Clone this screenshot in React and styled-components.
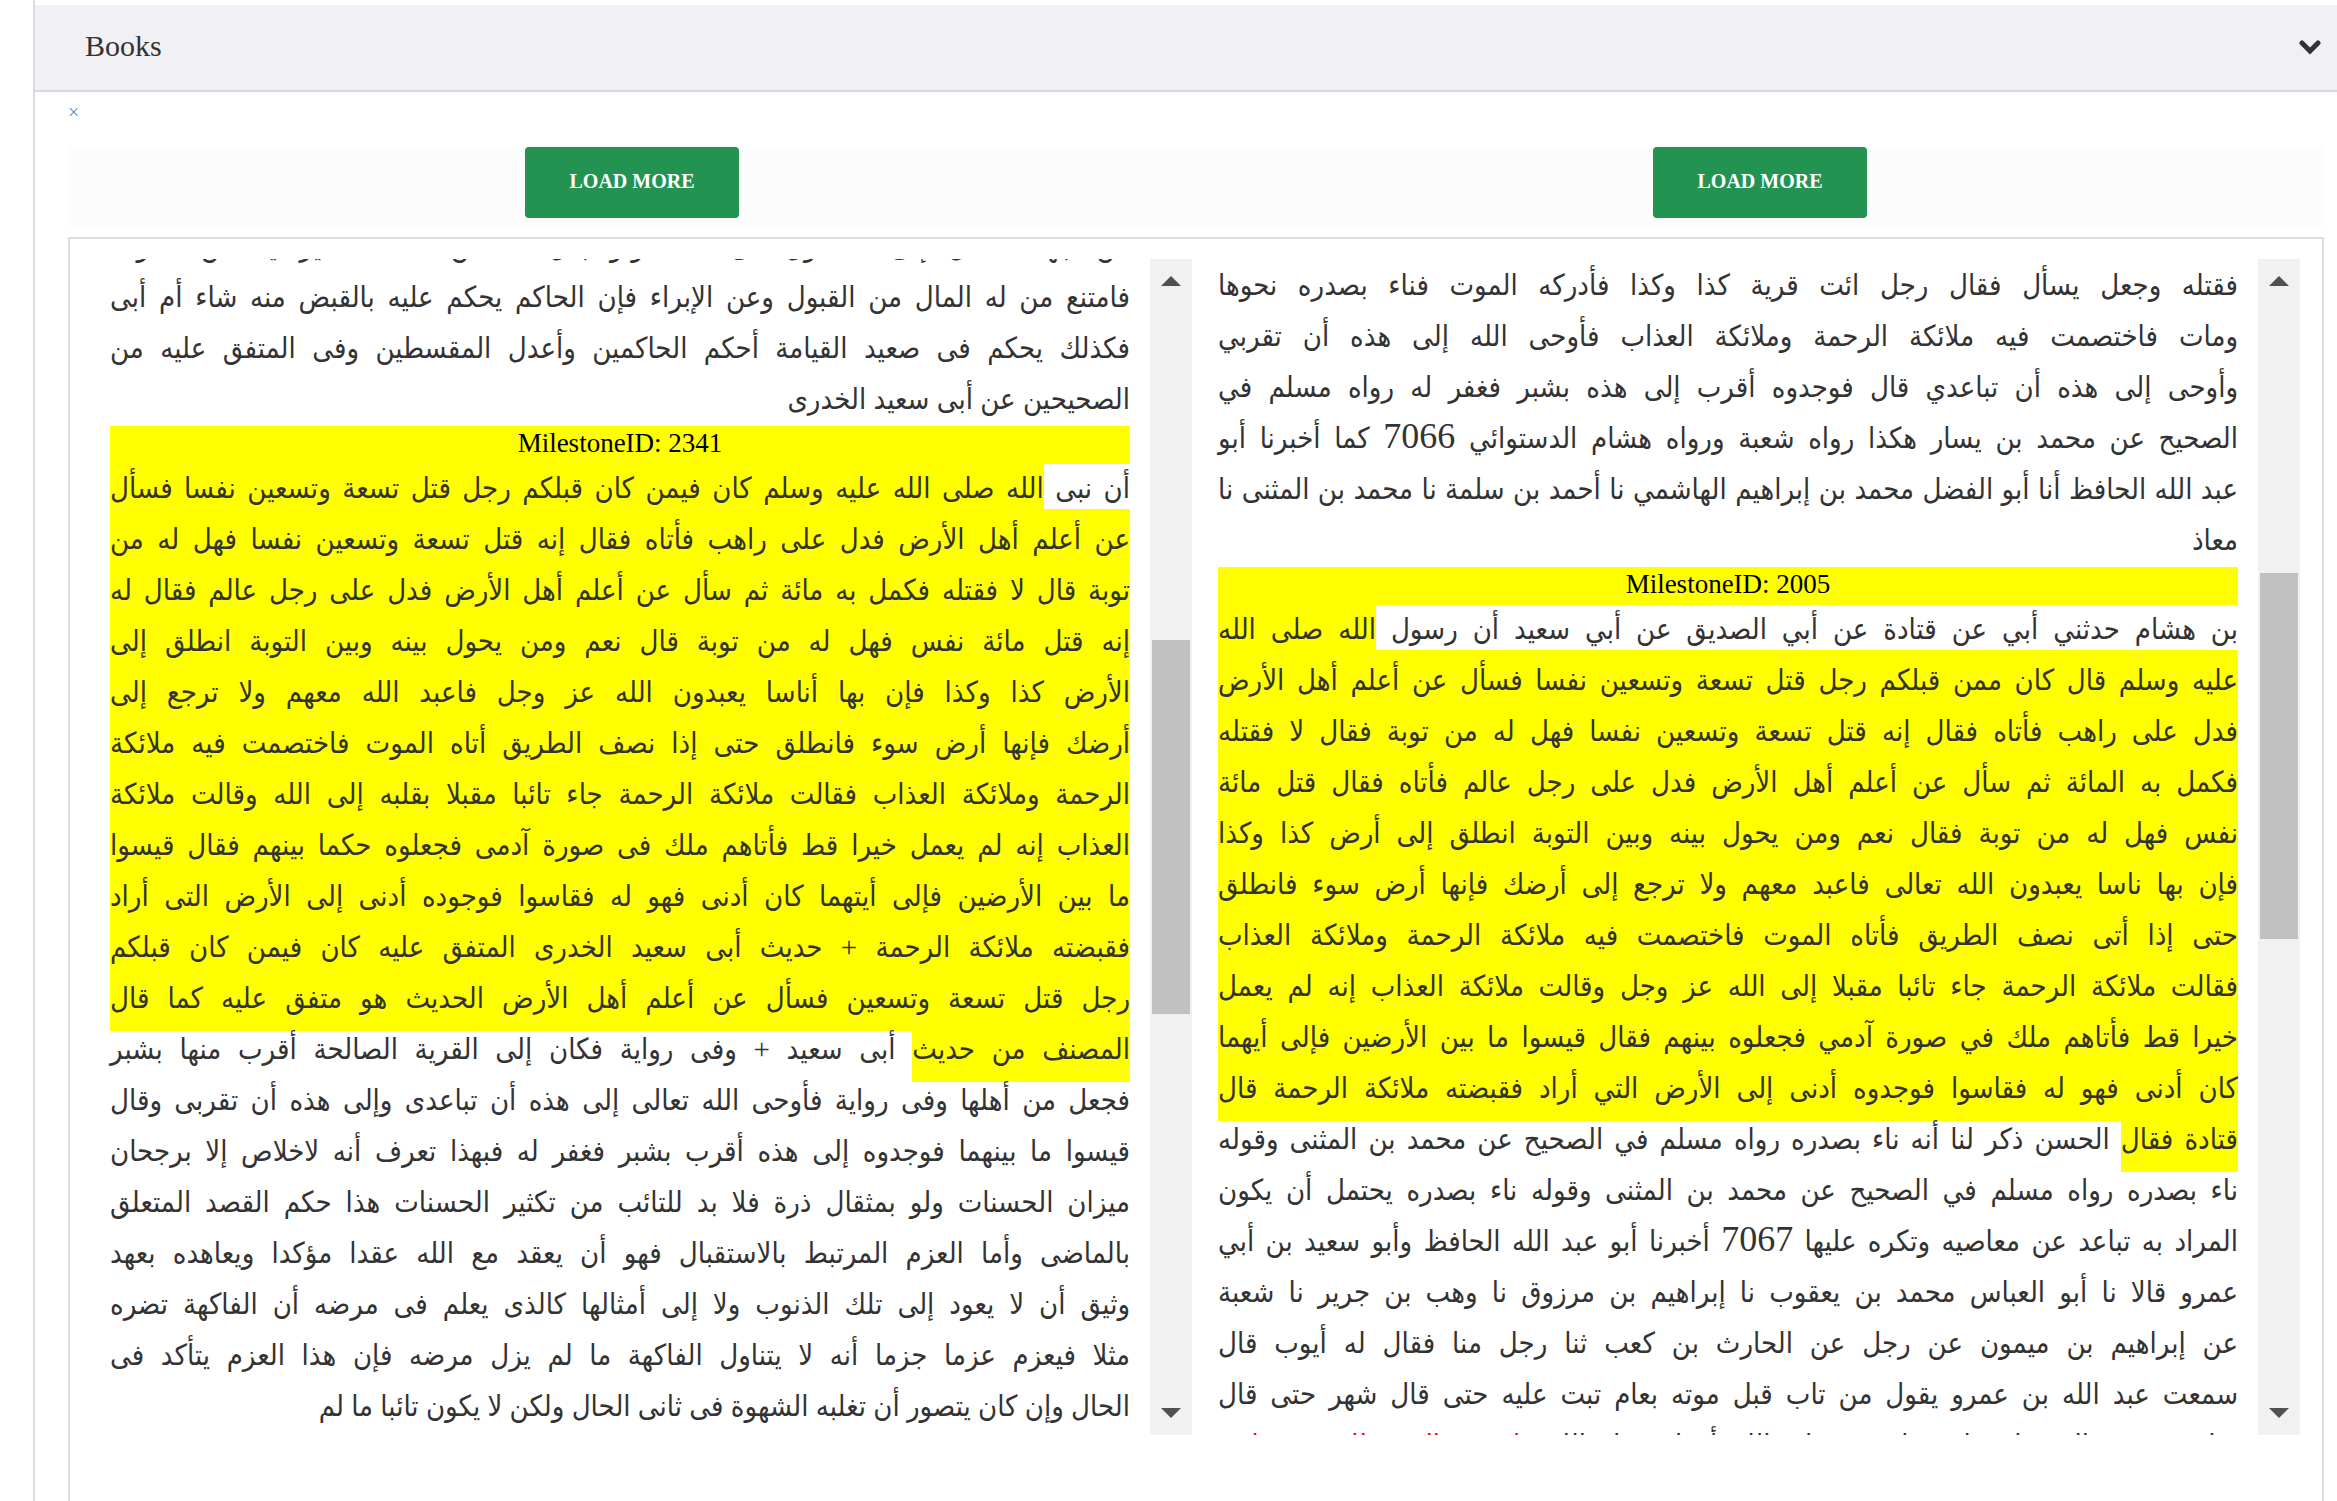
import React from "react";
import styled, { createGlobalStyle } from "styled-components";

const GlobalStyle = createGlobalStyle`
  * { box-sizing: border-box; }
  body { margin: 0; background: #fff; }
  button { font-family: inherit; border: 0; padding: 0; cursor: pointer; }
`;

const Page = styled.div`
  display: flex;
  height: 100vh;
  padding: 0 0 0 33px;
  overflow: hidden;
  color: #333;
  font-family: "Liberation Serif", "DejaVu Sans Condensed", "DejaVu Sans", serif;
`;

const Accordion = styled.section`
  display: flex;
  flex: 1;
  flex-direction: column;
  min-width: 0;
  padding-top: 5px;
  border-left: 2px solid #dcdcdc;
`;

const AccordionHeader = styled.button`
  display: flex;
  align-items: center;
  justify-content: space-between;
  flex: none;
  height: 87px;
  padding: 0 16px 4px 50px;
  border-bottom: 2px solid #d9d9dc;
  background: #f0f0f5;
  color: #333;
  font-size: 30px;
  line-height: 40px;
`;

const Body = styled.div`
  display: flex;
  flex: 1;
  flex-direction: column;
  min-height: 0;
  padding: 0 13px 0 33px;
`;

const CloseButton = styled.button`
  align-self: flex-start;
  height: 40px;
  margin-bottom: 15px;
  background: none;
  color: #5b8fd0;
  font-size: 20px;
  line-height: 40px;
`;

const LoadBar = styled.div`
  display: grid;
  grid-template-columns: 1fr 1fr;
  justify-items: center;
  flex: none;
  height: 80px;
  margin-bottom: 10px;
  background: #fcfcfc;
`;

const LoadButton = styled.button`
  width: 214px;
  height: 71px;
  padding-bottom: 2px;
  border-radius: 4px;
  background: #239351;
  color: #fff;
  font-size: 20px;
  font-weight: 700;
`;

const Panel = styled.div`
  display: grid;
  grid-template-columns: 1fr 1fr;
  flex: 1;
  min-height: 0;
  padding: 20px 22px 66px 14px;
  border: 2px solid #dcdcdc;
  border-bottom: 0;
`;

const Pane = styled.article`
  display: flex;
  min-width: 0;
  min-height: 0;
`;

const Viewport = styled.div`
  flex: 1;
  min-width: 0;
  padding: 0 20px 0 26px;
  overflow: hidden;
`;

const Passage = styled.div`
  margin-top: ${(p) => -p.$scrolled}px;
  direction: rtl;
  font-size: 29px;
  line-height: 48px;
`;

const Line = styled.div`
  height: 51px;
  white-space: nowrap;
  text-align: justify;
  text-align-last: ${(p) => (p.$last ? "start" : "justify")};
`;

const Milestone = styled.div`
  height: 38px;
  background: #ff0;
  color: #000;
  direction: ltr;
  font-size: 27px;
  line-height: 34px;
  text-align: center;
`;

const Highlight = styled.mark`
  padding: 14px 0 17px;
  background: #ff0;
  color: inherit;
`;

const Verse = styled.span`
  color: #f00;
`;

const Numeral = styled.span`
  font-size: 36px;
  line-height: 1;
`;

const Scrollbar = styled.div`
  display: flex;
  flex-direction: column;
  width: 42px;
  background: #f1f1f1;
`;

const ArrowButton = styled.button`
  display: flex;
  align-items: center;
  justify-content: center;
  flex: none;
  height: 44px;
  background: none;
`;

const Track = styled.div`
  display: grid;
  flex: 1;
  grid-template-rows: ${(p) => p.$rows};
  padding: 0 2px;
`;

const Thumb = styled.div`
  grid-row: 2;
  background: #c1c1c1;
`;

const hl = (text) => ({ kind: "highlight", text });
const verse = (text) => ({ kind: "verse", text });
const num = (text) => ({ kind: "numeral", text });

const books = [
  {
    id: 2341,
    scrolled: 37,
    rows: "337fr 374fr 377fr",
    before: [
      ["من جهة القاتل إلى المقتول فى حقه ولو بذل له من ماله ما يرضيه من حقوقه"],
      ["فامتنع من له المال من القبول وعن الإبراء فإن الحاكم يحكم عليه بالقبض منه شاء أم أبى"],
      ["فكذلك يحكم فى صعيد القيامة أحكم الحاكمين وأعدل المقسطين وفى المتفق عليه من"],
      ["الصحيحين عن أبى سعيد الخدرى"],
    ],
    after: [
      ["أن نبى ", hl("الله صلى الله عليه وسلم كان فيمن كان قبلكم رجل قتل تسعة وتسعين نفسا فسأل")],
      [hl("عن أعلم أهل الأرض فدل على راهب فأتاه فقال إنه قتل تسعة وتسعين نفسا فهل له من")],
      [hl("توبة قال لا فقتله فكمل به مائة ثم سأل عن أعلم أهل الأرض فدل على رجل عالم فقال له")],
      [hl("إنه قتل مائة نفس فهل له من توبة قال نعم ومن يحول بينه وبين التوبة انطلق إلى")],
      [hl("الأرض كذا وكذا فإن بها أناسا يعبدون الله عز وجل فاعبد الله معهم ولا ترجع إلى")],
      [hl("أرضك فإنها أرض سوء فانطلق حتى إذا نصف الطريق أتاه الموت فاختصمت فيه ملائكة")],
      [hl("الرحمة وملائكة العذاب فقالت ملائكة الرحمة جاء تائبا مقبلا بقلبه إلى الله وقالت ملائكة")],
      [hl("العذاب إنه لم يعمل خيرا قط فأتاهم ملك فى صورة آدمى فجعلوه حكما بينهم فقال قيسوا")],
      [hl("ما بين الأرضين فإلى أيتهما كان أدنى فهو له فقاسوا فوجوده أدنى إلى الأرض التى أراد")],
      [hl("فقبضته ملائكة الرحمة + حديث أبى سعيد الخدرى المتفق عليه كان فيمن كان قبلكم")],
      [hl("رجل قتل تسعة وتسعين فسأل عن أعلم أهل الأرض الحديث هو متفق عليه كما قال")],
      [hl("المصنف من حديث"), " أبى سعيد + وفى رواية فكان إلى القرية الصالحة أقرب منها بشبر"],
      ["فجعل من أهلها وفى رواية فأوحى الله تعالى إلى هذه أن تباعدى وإلى هذه أن تقربى وقال"],
      ["قيسوا ما بينهما فوجدوه إلى هذه أقرب بشبر فغفر له فبهذا تعرف أنه لاخلاص إلا برجحان"],
      ["ميزان الحسنات ولو بمثقال ذرة فلا بد للتائب من تكثير الحسنات هذا حكم القصد المتعلق"],
      ["بالماضى وأما العزم المرتبط بالاستقبال فهو أن يعقد مع الله عقدا مؤكدا ويعاهده بعهد"],
      ["وثيق أن لا يعود إلى تلك الذنوب ولا إلى أمثالها كالذى يعلم فى مرضه أن الفاكهة تضره"],
      ["مثلا فيعزم عزما جزما أنه لا يتناول الفاكهة ما لم يزل مرضه فإن هذا العزم يتأكد فى"],
      ["الحال وإن كان يتصور أن تغلبه الشهوة فى ثانى الحال ولكن لا يكون تائبا ما لم"],
    ],
  },
  {
    id: 2005,
    scrolled: 49,
    rows: "270fr 366fr 452fr",
    before: [
      ["فقال إنه قتل تسعة وتسعين نفسا فهل له من توبة فقال لا ليست لك توبة"],
      ["فقتله وجعل يسأل فقال رجل ائت قرية كذا وكذا فأدركه الموت فناء بصدره نحوها"],
      ["ومات فاختصمت فيه ملائكة الرحمة وملائكة العذاب فأوحى الله إلى هذه أن تقربي"],
      ["وأوحى إلى هذه أن تباعدي قال فوجدوه أقرب إلى هذه بشبر فغفر له رواه مسلم في"],
      ["الصحيح عن محمد بن يسار هكذا رواه شعبة ورواه هشام الدستوائي ", num("7066"), " كما أخبرنا أبو"],
      ["عبد الله الحافظ أنا أبو الفضل محمد بن إبراهيم الهاشمي نا أحمد بن سلمة نا محمد بن المثنى نا"],
      ["معاذ"],
    ],
    after: [
      ["بن هشام حدثني أبي عن قتادة عن أبي الصديق عن أبي سعيد أن رسول ", hl("الله صلى الله")],
      [hl("عليه وسلم قال كان ممن قبلكم رجل قتل تسعة وتسعين نفسا فسأل عن أعلم أهل الأرض")],
      [hl("فدل على راهب فأتاه فقال إنه قتل تسعة وتسعين نفسا فهل له من توبة فقال لا فقتله")],
      [hl("فكمل به المائة ثم سأل عن أعلم أهل الأرض فدل على رجل عالم فأتاه فقال قتل مائة")],
      [hl("نفس فهل له من توبة فقال نعم ومن يحول بينه وبين التوبة انطلق إلى أرض كذا وكذا")],
      [hl("فإن بها ناسا يعبدون الله تعالى فاعبد معهم ولا ترجع إلى أرضك فإنها أرض سوء فانطلق")],
      [hl("حتى إذا أتى نصف الطريق فأتاه الموت فاختصمت فيه ملائكة الرحمة وملائكة العذاب")],
      [hl("فقالت ملائكة الرحمة جاء تائبا مقبلا إلى الله عز وجل وقالت ملائكة العذاب إنه لم يعمل")],
      [hl("خيرا قط فأتاهم ملك في صورة آدمي فجعلوه بينهم فقال قيسوا ما بين الأرضين فإلى أيهما")],
      [hl("كان أدنى فهو له فقاسوا فوجدوه أدنى إلى الأرض التي أراد فقبضته ملائكة الرحمة قال")],
      [hl("قتادة فقال"), " الحسن ذكر لنا أنه ناء بصدره رواه مسلم في الصحيح عن محمد بن المثنى وقوله"],
      ["ناء بصدره رواه مسلم في الصحيح عن محمد بن المثنى وقوله ناء بصدره يحتمل أن يكون"],
      ["المراد به تباعد عن معاصيه وتكره عليها ", num("7067"), " أخبرنا أبو عبد الله الحافظ وأبو سعيد بن أبي"],
      ["عمرو قالا نا أبو العباس محمد بن يعقوب نا إبراهيم بن مرزوق نا وهب بن جرير نا شعبة"],
      ["عن إبراهيم بن ميمون عن رجل عن الحارث بن كعب ثنا رجل منا فقال له أيوب قال"],
      ["سمعت عبد الله بن عمرو يقول من تاب قبل موته بعام تبت عليه حتى قال شهر حتى قال"],
      ["ساعة حتى قال فواق ناقة قلت سبحان الله أو لم يقل الله ", verse("وليست التوبة للذين يعملون")],
    ],
  },
];

const kinds = { highlight: Highlight, verse: Verse, numeral: Numeral };

function Segment({ value }) {
  if (typeof value === "string") return value;
  const Kind = kinds[value.kind];
  return <Kind>{value.text}</Kind>;
}

function Lines({ lines, endsShort }) {
  return lines.map((segments, i) => (
    <Line key={i} $last={endsShort && i === lines.length - 1}>
      {segments.map((s, j) => (
        <Segment key={j} value={s} />
      ))}
    </Line>
  ));
}

function Arrow({ down }) {
  return (
    <svg width="20" height="10" viewBox="0 0 20 10" aria-hidden="true">
      <path d={down ? "M0 0h20L10 10z" : "M0 10h20L10 0z"} fill="#505050" />
    </svg>
  );
}

function Book({ book }) {
  return (
    <Pane>
      <Viewport>
        <Passage $scrolled={book.scrolled} lang="ar">
          <Lines lines={book.before} endsShort />
          <Milestone>MilestoneID: {book.id}</Milestone>
          <Lines lines={book.after} endsShort={book.id === 2341} />
        </Passage>
      </Viewport>
      <Scrollbar>
        <ArrowButton aria-label="Scroll up"><Arrow /></ArrowButton>
        <Track $rows={book.rows}><Thumb /></Track>
        <ArrowButton aria-label="Scroll down"><Arrow down /></ArrowButton>
      </Scrollbar>
    </Pane>
  );
}

export default function App() {
  return (
    <Page>
      <GlobalStyle />
      <Accordion>
        <AccordionHeader aria-expanded="true">
          Books
          <svg width="22" height="20" viewBox="0 0 22 20" aria-hidden="true">
            <path d="M3 7l8 8 8-8" fill="none" stroke="#333" strokeWidth="5" strokeLinecap="round" />
          </svg>
        </AccordionHeader>
        <Body>
          <CloseButton aria-label="Close">×</CloseButton>
          <LoadBar>
            <LoadButton>LOAD MORE</LoadButton>
            <LoadButton>LOAD MORE</LoadButton>
          </LoadBar>
          <Panel>
            {books.map((b) => (
              <Book key={b.id} book={b} />
            ))}
          </Panel>
        </Body>
      </Accordion>
    </Page>
  );
}
